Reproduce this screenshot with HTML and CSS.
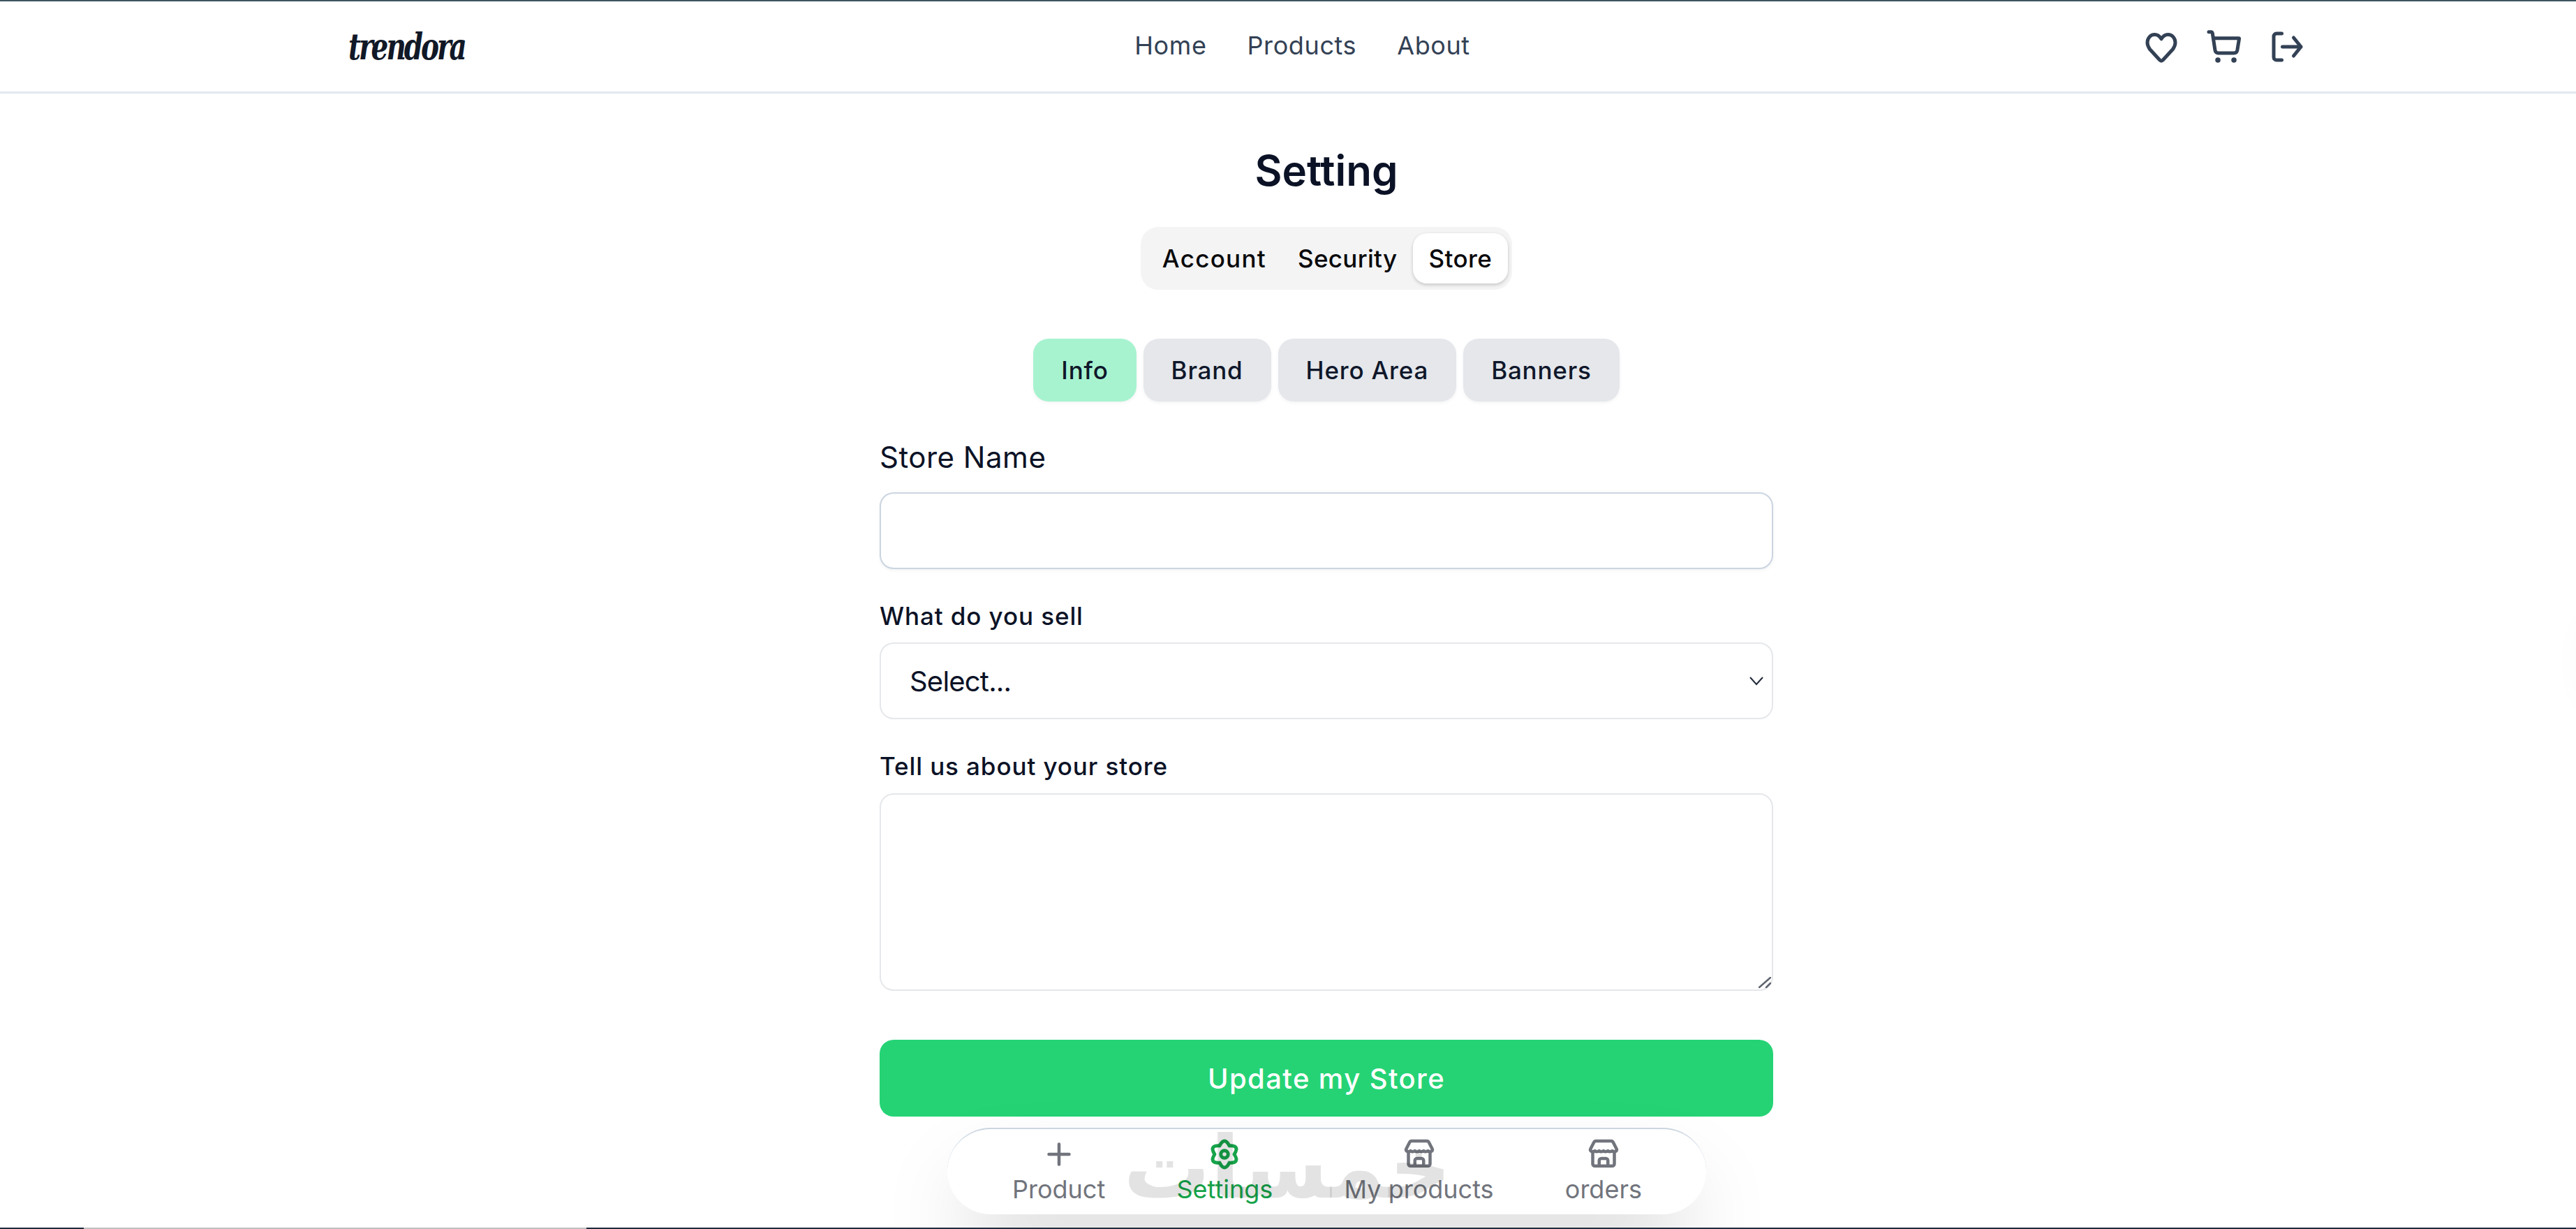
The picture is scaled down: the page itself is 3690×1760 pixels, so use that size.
FILE: index.html
```html
<!DOCTYPE html>
<html lang="en">
<head>
  <meta charset="UTF-8" />
  <meta name="viewport" content="width=device-width, initial-scale=1" />
  <title>Trendora - Setting</title>
  <link rel="stylesheet" href="styles.css">
</head>
<body>
<div class="page">

  <header class="topbar">
    <a class="logo"><span class="logo-text">trendora</span></a>
    <nav class="links">
      <a>Home</a>
      <a>Products</a>
      <a>About</a>
    </nav>
    <div class="actions">
      <svg class="icon" viewBox="0 0 24 24"><path d="M12 7.5C11 5.9 9.7 5 8.2 5 5.8 5 4 7 4 9.6c0 1.4.6 2.6 1.4 3.8l5.700 6.200c.5.6 1.300.6 1.800 0l5.700-6.200c.8-1.200 1.400-2.400 1.400-3.800C20 7 18.200 5 15.800 5c-1.500 0-2.800.9-3.800 2.500z"/></svg>
      <svg class="icon" viewBox="0 0 24 24"><path d="M3.200 3.500h1.300c.4 0 .7.3.8.7l1.500 9.800c.1.900.9 1.600 1.800 1.600h9.100c.9 0 1.600-.6 1.800-1.500l1.100-6.700c0-.1-.1-.3-.3-.3H6"/><circle class="dot" cx="8.400" cy="19.600" r="1.500"/><circle class="dot" cx="17.600" cy="19.600" r="1.500"/></svg>
      <svg class="icon" viewBox="0 0 24 24"><path d="M9 4.400H6c-.9 0-1.600.7-1.600 1.600v12c0 .9.700 1.600 1.600 1.600h3M9.400 12H20M15.800 6.800l4.200 5.200-4.200 5.200"/></svg>
    </div>
  </header>

  <main class="content">
    <h1 class="title">Setting</h1>

    <div class="tabs">
      <button class="tab tab-account">Account</button>
      <button class="tab tab-security">Security</button>
      <button class="tab tab-store active">Store</button>
    </div>

    <div class="subtabs">
      <button class="subtab active">Info</button>
      <button class="subtab">Brand</button>
      <button class="subtab">Hero Area</button>
      <button class="subtab">Banners</button>
    </div>

    <form class="store-form">
      <label class="label-big" for="store-name">Store Name</label>
      <input class="field field-name" id="store-name" type="text" />

      <label class="label" for="store-type">What do you sell</label>
      <div class="select-box">
        <select class="field field-select" id="store-type">
          <option>Select...</option>
        </select>
        <svg class="chevron" viewBox="0 0 24 14"><path d="M3 2l9 10 9-10"/></svg>
      </div>

      <label class="label" for="store-about">Tell us about your store</label>
      <div class="area-box">
        <textarea class="field field-area" id="store-about"></textarea>
        <svg class="grip" viewBox="0 0 18 16"><path d="M1 15L17 1M11 15l6-6"/></svg>
      </div>

      <button class="submit" type="button">Update my Store</button>
    </form>
  </main>

  <div class="edge">
    <span class="edge-dark edge-a"></span>
    <span class="edge-gray"></span>
    <span class="edge-dark edge-b"></span>
  </div>

  <nav class="dock">
    <a class="dock-item item-product">
      <svg class="dock-icon" viewBox="0 0 20 20"><path d="M10 4.200v11.600M4.200 10h11.600"/></svg>
      <span>Product</span>
    </a>
    <a class="dock-item item-settings active">
      <svg class="dock-icon gear" viewBox="0 0 24 24"><path d="M9.200 7.150Q12 1.650 14.800 7.150Q20.960 6.830 17.600 12Q20.960 17.180 14.800 16.850Q12 22.350 9.200 16.850Q3.040 17.180 6.400 12Q3.040 6.830 9.200 7.150Z"/><circle cx="12" cy="12" r="2.100"/></svg>
      <span>Settings</span>
    </a>
    <a class="dock-item item-products">
      <svg class="dock-icon" viewBox="0 0 20 20"><path d="M5.600 2.400h8.800c.5 0 .9.300 1.100.7l2 3.900c.2.500 0 .9-.3 1M5.600 2.400c-.5 0-.9.300-1.100.7l-2 3.900c-.2.500 0 .9.300 1M2.600 8q1.200 1 2.400 0q1.200 1 2.500 0q1.200 1 2.500 0q1.200 1 2.500 0q1.200 1 2.500 0q1.200 1 2.400 0M3.800 8.500v7c0 .7.500 1.200 1.200 1.200h10c.7 0 1.200-.5 1.200-1.200v-7M7.500 16.700v-3.100c0-.7.500-1.200 1.200-1.200h2.600c.7 0 1.200.5 1.200 1.200v3.100"/></svg>
      <span>My products</span>
    </a>
    <a class="dock-item item-orders">
      <svg class="dock-icon" viewBox="0 0 20 20"><path d="M5.600 2.400h8.800c.5 0 .9.300 1.100.7l2 3.900c.2.500 0 .9-.3 1M5.600 2.400c-.5 0-.9.300-1.100.7l-2 3.900c-.2.500 0 .9.300 1M2.600 8q1.200 1 2.400 0q1.200 1 2.500 0q1.200 1 2.500 0q1.200 1 2.500 0q1.200 1 2.500 0q1.200 1 2.400 0M3.800 8.500v7c0 .7.500 1.200 1.200 1.200h10c.7 0 1.200-.5 1.200-1.200v-7M7.500 16.700v-3.100c0-.7.500-1.200 1.200-1.200h2.600c.7 0 1.200.5 1.200 1.200v3.100"/></svg>
      <span>orders</span>
    </a>
  </nav>

  <div class="watermark" lang="ar" dir="rtl">خمسات</div>
  <div class="side-glow"></div>
</div>
</body>
</html>
```

FILE: styles.css
```css
html, body {
  margin: 0; height: 100%; overflow: hidden; background: #fff;
}
.page {
  position: relative; width: 3800px; height: 1760px;
  display: flex; flex-direction: column;
  border-top: 2px solid #3f5560; box-sizing: border-box;
  font-family: Inter, "Noto Sans", sans-serif; color: #0b1226;
}
button, input, select, textarea { font-family: inherit; }

/* Top bar */
.topbar {
  display: flex; justify-content: space-between; align-items: center;
  height: 129px; padding: 0 494px 0 499px; flex-shrink: 0;
  border-bottom: 3px solid #e2e8f0;
}
.logo { display: block; width: 166px; line-height: 1; white-space: nowrap; }
.logo-text {
  display: inline-block; transform: scaleX(0.75); transform-origin: left center;
  font-family: "DejaVu Serif", serif; font-weight: 700; font-style: italic;
  font-size: 52px; letter-spacing: -4px; color: #111827;
}
.links { display: flex; gap: 58px; padding-bottom: 4px; }
.links a { font-size: 36px; color: #334155; letter-spacing: 0.600px; }
.actions { display: flex; gap: 30px; }
.icon {
  width: 60px; height: 60px; fill: none; stroke: #334155; stroke-width: 2;
  stroke-linecap: round; stroke-linejoin: round;
}
.icon .dot { fill: #334155; stroke: none; }

/* Main column */
.content {
  flex: 1; display: flex; flex-direction: column; align-items: center;
  padding-top: 70px;
}
.title { margin: 0; font-size: 60px; line-height: 80px; font-weight: 600; }

.tabs {
  display: flex; margin-top: 41px; padding: 9px 6px 9px 8px; border-radius: 25px;
  background: #f4f4f5;
}
.tab {
  height: 72px; border: 0; background: none; border-radius: 20px;
  font-size: 35px; font-weight: 500; color: #09090b; padding: 0 22.500px;
}
.tab-account { letter-spacing: 1.300px; }
.tab-security { letter-spacing: 0.300px; }
.tab-store { letter-spacing: 0.400px; }
.tab.active { background: #fff; box-shadow: 0 2px 5px rgba(0,0,0,0.2); }

.subtabs { display: flex; gap: 10px; margin-top: 70px; }
.subtab {
  height: 90px; border: 0; border-radius: 22px; padding: 0 40px;
  background: #e5e7eb; font-size: 35px; font-weight: 500; color: #0f172a;
  letter-spacing: 0.800px; box-shadow: 0 2px 5px rgba(0,0,0,0.05);
}
.subtab.active { background: #a7f3d0; }

/* Form */
.store-form { width: 1280px; display: flex; flex-direction: column; margin-top: 46px; }
.label-big { font-size: 42px; line-height: 68px; letter-spacing: 0.500px; }
.label { font-size: 35px; line-height: 50px; font-weight: 500; letter-spacing: 0.900px; }
.field {
  display: block; width: 100%; box-sizing: border-box; background: #fff;
  border: 2.500px solid #e5e7eb; border-radius: 20px; outline: none; color: #0b1226;
}
.field-name {
  height: 110px; margin-top: 16px; margin-bottom: 42px; border-color: #cbd5e1;
  box-shadow: 0 2px 5px rgba(0,0,0,0.05);
}
.select-box { position: relative; margin-top: 13px; margin-bottom: 42px; }
.area-box { position: relative; margin-top: 14px; }
.field-select {
  height: 110px; padding-left: 41px; font-size: 40px; appearance: none; letter-spacing: -0.800px;
}
.chevron {
  position: absolute; right: 12px; top: 48px; width: 24px; height: 14px;
  fill: none; stroke: #1f2937; stroke-width: 2;
}
.field-area { height: 283px; resize: none; }
.grip {
  position: absolute; right: 3px; bottom: 4px; width: 18px; height: 16px;
  fill: none; stroke: #5f6670; stroke-width: 2.500; stroke-linecap: round;
}
.submit {
  height: 110px; margin-top: 70px; border: 0; border-radius: 20px; background: #25d375;
  color: #fff; font-size: 40px; font-weight: 500; letter-spacing: 1.400px;
}

/* Bottom edge of the window */
.edge { display: flex; height: 2px; flex-shrink: 0; position: relative; z-index: 2; }
.edge-dark { background: #1e2d3d; }
.edge-a { width: 120px; }
.edge-gray { width: 720px; background: #bfbfbf; }
.edge-b { flex: 1; }

/* Floating dock */
.dock {
  position: absolute; left: 1357px; bottom: 21px; z-index: 1;
  width: 1087px; height: 124px; box-sizing: border-box;
  display: flex; justify-content: space-between; padding: 11px 92px 0 93px;
  background: #fff; border-radius: 62px; border-top: 2.500px solid #cbd5e1;
  box-shadow: 0 62px 125px -30px rgba(0,0,0,0.25);
}
.dock-item {
  display: flex; flex-direction: column; align-items: center;
  color: #71747c; font-size: 36px; line-height: 50px;
}
.dock-item.active { color: #16a34a; }
.dock-icon {
  width: 50px; height: 50px; fill: none; stroke: currentColor; stroke-width: 1.800;
  stroke-linecap: round; stroke-linejoin: round;
}
.dock-icon.gear { width: 60px; height: 60px; margin: -5px 0; stroke-width: 2; }

.watermark {
  position: absolute; left: 1635px; top: 1590px; z-index: 1; width: 444px;
  font-family: "DejaVu Sans", sans-serif; font-weight: 700; font-size: 124px; line-height: 160px;
  color: rgba(0,0,0,0.11); text-align: center; white-space: nowrap; pointer-events: none;
}

.side-glow {
  position: absolute; left: 3710px; top: 880px; width: 60px; height: 130px; border-radius: 50%;
  box-shadow: 0 0 60px rgba(0,0,0,0.06);
}
```
